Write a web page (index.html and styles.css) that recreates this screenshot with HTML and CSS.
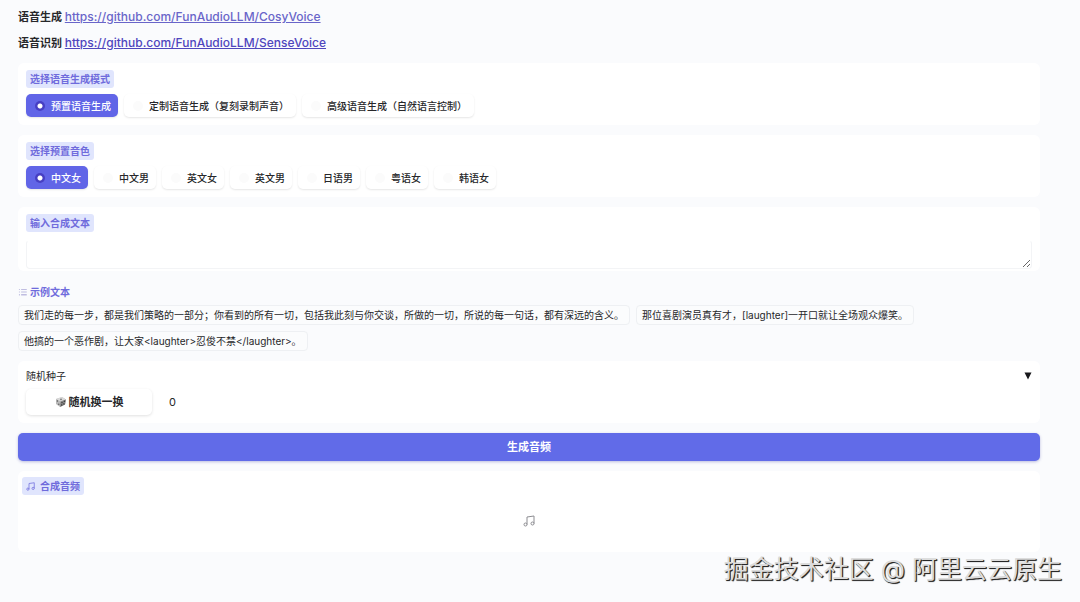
FILE: index.html
```html
<!DOCTYPE html>
<html lang="zh-CN">
<head>
<meta charset="utf-8">
<title>语音生成</title>
<meta name="viewport" content="width=device-width, initial-scale=1">
<link rel="stylesheet" href="styles.css">
</head>
<body>
<main class="app">
  <header class="links">
    <p>语音生成 <a href="https://github.com/FunAudioLLM/CosyVoice">https://github.com/FunAudioLLM/CosyVoice</a></p>
    <p>语音识别 <a class="strong" href="https://github.com/FunAudioLLM/SenseVoice">https://github.com/FunAudioLLM/SenseVoice</a></p>
  </header>

  <fieldset class="panel">
    <legend class="tag">选择语音生成模式</legend>
    <div class="options">
      <label class="option"><input type="radio" name="mode" checked><span>预置语音生成</span></label>
      <label class="option"><input type="radio" name="mode"><span>定制语音生成（复刻录制声音）</span></label>
      <label class="option"><input type="radio" name="mode"><span>高级语音生成（自然语言控制）</span></label>
    </div>
  </fieldset>

  <fieldset class="panel">
    <legend class="tag">选择预置音色</legend>
    <div class="options">
      <label class="option"><input type="radio" name="voice" checked><span>中文女</span></label>
      <label class="option"><input type="radio" name="voice"><span>中文男</span></label>
      <label class="option"><input type="radio" name="voice"><span>英文女</span></label>
      <label class="option"><input type="radio" name="voice"><span>英文男</span></label>
      <label class="option"><input type="radio" name="voice"><span>日语男</span></label>
      <label class="option"><input type="radio" name="voice"><span>粤语女</span></label>
      <label class="option"><input type="radio" name="voice"><span>韩语女</span></label>
    </div>
  </fieldset>

  <section class="panel text-panel">
    <label class="tag" for="text">输入合成文本</label>
    <textarea id="text" class="textbox" rows="1"></textarea>
  </section>

  <section class="examples">
    <h2 class="examples-title">
      <svg class="list-icon" viewBox="0 0 32 32" aria-hidden="true"><path d="M10 6h18v2H10zM10 15h18v2H10zM10 24h18v2H10zM3 6h3v2H3zM3 15h3v2H3zM3 24h3v2H3z"/></svg>
      <span>示例文本</span>
    </h2>
    <div class="chips">
      <button type="button" class="chip">我们走的每一步，都是我们策略的一部分；你看到的所有一切，包括我此刻与你交谈，所做的一切，所说的每一句话，都有深远的含义。</button>
      <button type="button" class="chip">那位喜剧演员真有才，[laughter]一开口就让全场观众爆笑。</button>
      <button type="button" class="chip">他搞的一个恶作剧，让大家&lt;laughter&gt;忍俊不禁&lt;/laughter&gt;。</button>
    </div>
  </section>

  <section class="panel seed">
    <button type="button" class="accordion" aria-expanded="true"><span>随机种子</span>
      <svg class="caret" viewBox="0 0 8 8" aria-hidden="true"><path d="M.5.5h7L4 7.500z"/></svg>
    </button>
    <div class="seed-row">
      <button type="button" class="shuffle">
        <svg class="dice" viewBox="0 0 12 12" aria-hidden="true">
          <path d="M1 3 7 1l4 2.500-1 5L5 11 1 8z" fill="#b9b9b9"/>
          <path d="M1 3 7 1l4 2.500L5.500 5.500z" fill="#d9d9d9"/>
          <path d="M5.500 5.500 11 3.500 10 8.500 5 11z" fill="#858585"/>
          <circle cx="6" cy="3.300" r=".9" fill="#777"/>
          <circle cx="2.400" cy="5" r=".7" fill="#555"/><circle cx="3.800" cy="8.300" r=".7" fill="#555"/>
          <circle cx="7" cy="6.600" r=".7" fill="#333"/><circle cx="9.400" cy="5.300" r=".7" fill="#333"/><circle cx="6.700" cy="9" r=".7" fill="#333"/><circle cx="8.900" cy="7.900" r=".7" fill="#333"/>
        </svg>
        <span>随机换一换</span>
      </button>
      <input class="seed-value" type="number" value="0" aria-label="随机种子">
    </div>
  </section>

  <button type="button" class="generate">生成音频</button>

  <section class="panel audio">
    <h2 class="tag audio-tag">
      <svg class="note" viewBox="0 0 24 24" aria-hidden="true"><path d="M8 19V4l14-2v15"/><circle cx="5" cy="19" r="3"/><circle cx="19" cy="17" r="3"/></svg>
      <span>合成音频</span>
    </h2>
    <div class="empty">
      <svg class="note-large" viewBox="0 0 24 24" aria-hidden="true"><path d="M8 19V4l14-2v15"/><circle cx="5" cy="19" r="3"/><circle cx="19" cy="17" r="3"/></svg>
    </div>
  </section>
</main>
<div class="watermark">掘金技术社区 @ 阿里云云原生</div>
</body>
</html>
```
FILE: styles.css
```css
* { box-sizing: border-box; }

body {
  margin: 0;
  min-height: 100vh;
  position: relative;
  background: #fafbfd;
  color: #27272a;
  font: 10px/14px Inter, "Noto Sans CJK SC", sans-serif;
}

button, input, textarea { font: inherit; color: inherit; }
button { cursor: pointer; }

.app {
  display: flex;
  flex-direction: column;
  gap: 10px;
  padding: 7px 40px 44px 18px;
}

.links {
  display: flex;
  flex-direction: column;
  gap: 6px;
  font-size: 11px;
  line-height: 20px;
  font-weight: 600;
}
.links p { margin: 0; }
.links a {
  color: #6965c9;
  font-size: 12px;
  font-weight: 500;
  text-underline-offset: 1px;
}
.links .strong { color: #4f46bd; }

.panel {
  margin: 0;
  min-width: 0;
  padding: 7px 8px 8px;
  border: 0;
  border-radius: 6px;
  background: #fff;
}

.tag {
  display: block;
  float: left;
  margin: 0;
  padding: 2px 4px;
  border-radius: 3px;
  background: #e0e5fd;
  color: #6f6bdc;
  font-size: 10px;
  line-height: 14px;
  font-weight: 600;
}

.options {
  clear: both;
  display: flex;
  flex-wrap: wrap;
  gap: 6px;
  padding-top: 6px;
}
.option {
  display: flex;
  align-items: center;
  gap: 6px;
  height: 23px;
  padding: 0 7px 0 9px;
  border-radius: 5px;
  background: #fff;
  box-shadow: 0 1px 2px rgba(0, 0, 0, .1);
  font-weight: 500;
}
.option:has(:checked) { background: #6165e7; color: #fff; }
.option input {
  appearance: none;
  width: 10px;
  height: 10px;
  margin: 0;
  border-radius: 50%;
  background: #fbfbfb;
}
.option input:checked {
  background: radial-gradient(circle, #fff 0 2px, #463fc3 3px);
}

.text-panel {
  display: flex;
  flex-direction: column;
  align-items: flex-start;
  gap: 8px;
  padding-bottom: 2px;
}
.textbox {
  display: block;
  width: 100%;
  height: 29px;
  padding: 6px;
  border: 1px solid #f3f4f6;
  border-top-color: #fff;
  border-radius: 4px;
  background: #fff;
  outline: 0;
}

.examples { padding-top: 4px; }
.examples-title {
  display: flex;
  align-items: center;
  gap: 2px;
  margin: 0 0 6px;
  color: #6f6bdc;
  font-size: 10px;
  line-height: 14px;
  font-weight: 600;
}
.list-icon { width: 10px; height: 10px; fill: #8580c5; }
.chips { display: flex; flex-wrap: wrap; gap: 6px; }
.chip {
  height: 20px;
  padding: 0 5px;
  border: 1px solid #eef0f3;
  border-radius: 4px;
  background: #fbfcfd;
  white-space: nowrap;
}

.seed { padding-top: 8px; }
.accordion {
  display: flex;
  justify-content: space-between;
  align-items: center;
  width: 100%;
  padding: 0;
  border: 0;
  background: none;
}
.caret { width: 8px; height: 8px; fill: #18181b; }
.seed-row {
  display: flex;
  gap: 10px;
  padding-top: 6px;
}
.shuffle {
  display: flex;
  justify-content: center;
  align-items: center;
  gap: 2px;
  width: 126px;
  height: 26px;
  padding: 0;
  border: 0;
  border-radius: 5px;
  background: #fff;
  box-shadow: 0 1px 3px rgba(0, 0, 0, .12);
  font-size: 11px;
  font-weight: 700;
}
.dice { width: 12px; height: 12px; }
.seed-value {
  flex: 1;
  min-width: 0;
  padding: 0 7px;
  border: 0;
  background: none;
  outline: 0;
  font-size: 11px;
}

.generate {
  height: 28px;
  padding: 0;
  border: 0;
  border-radius: 5px;
  background: #616be8;
  color: #fff;
  box-shadow: 0 1px 3px rgba(70, 72, 170, .35);
  font-size: 11px;
  font-weight: 700;
}

.audio { padding: 6px 4px 18px; }
.audio-tag { display: flex; align-items: center; gap: 5px; }
.note, .note-large {
  fill: none;
  stroke: currentColor;
  stroke-width: 2;
}
.note { width: 9px; height: 9px; }
.note-large { width: 12px; height: 12px; color: #8d8d92; }
.empty {
  clear: both;
  display: flex;
  justify-content: center;
  padding: 20px 0 7px;
}

.watermark {
  position: absolute;
  right: 18px;
  bottom: 15px;
  color: #dcdcdc;
  font-size: 25px;
  line-height: 36px;
  text-shadow: 1px 1px 1px #222, 1px 1px 0 #555;
}
```
